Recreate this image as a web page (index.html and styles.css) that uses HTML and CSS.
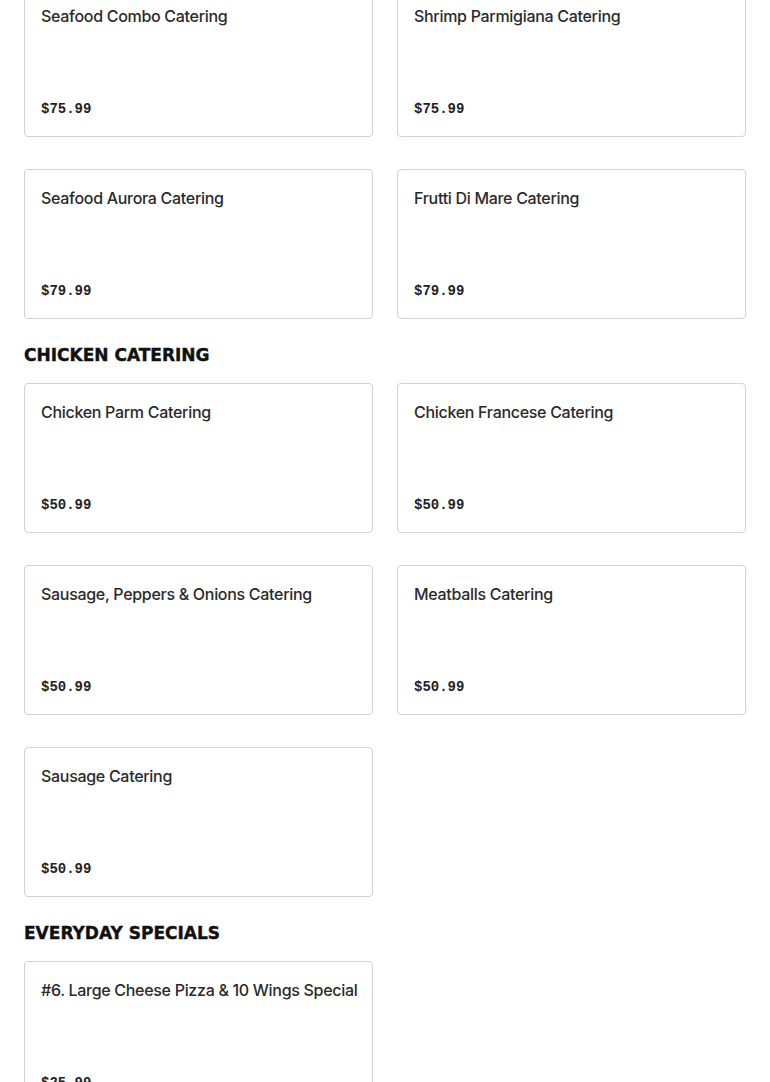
FILE: index.html
```html
<!DOCTYPE html>
<html lang="en">
<head>
    <meta charset="UTF-8">
    <meta name="viewport" content="width=device-width, initial-scale=1.0">
    <title>Menu</title>
    <link rel="stylesheet" href="styles.css">
</head>
<body>
    <div class="menu">
        <section class="section section-first">
            <div class="grid">
                <div class="card">
                    <div class="card-title">Seafood Combo Catering</div>
                    <div class="card-price">$75.99</div>
                </div>
                <div class="card">
                    <div class="card-title">Shrimp Parmigiana Catering</div>
                    <div class="card-price">$75.99</div>
                </div>
                <div class="card">
                    <div class="card-title">Seafood Aurora Catering</div>
                    <div class="card-price">$79.99</div>
                </div>
                <div class="card">
                    <div class="card-title">Frutti Di Mare Catering</div>
                    <div class="card-price">$79.99</div>
                </div>
            </div>
        </section>

        <section class="section">
            <h2 class="section-title">CHICKEN CATERING</h2>
            <div class="grid">
                <div class="card">
                    <div class="card-title">Chicken Parm Catering</div>
                    <div class="card-price">$50.99</div>
                </div>
                <div class="card">
                    <div class="card-title">Chicken Francese Catering</div>
                    <div class="card-price">$50.99</div>
                </div>
                <div class="card">
                    <div class="card-title">Sausage, Peppers &amp; Onions Catering</div>
                    <div class="card-price">$50.99</div>
                </div>
                <div class="card">
                    <div class="card-title">Meatballs Catering</div>
                    <div class="card-price">$50.99</div>
                </div>
                <div class="card">
                    <div class="card-title">Sausage Catering</div>
                    <div class="card-price">$50.99</div>
                </div>
            </div>
        </section>

        <section class="section">
            <h2 class="section-title">EVERYDAY SPECIALS</h2>
            <div class="grid">
                <div class="card">
                    <div class="card-title">#6. Large Cheese Pizza &amp; 10 Wings Special</div>
                    <div class="card-price">$25.99</div>
                </div>
            </div>
        </section>
    </div>
</body>
</html>
```

FILE: styles.css
```css
body {
    margin: 0;
    background: #fff;
    font-family: Inter, 'Liberation Sans', Arial, sans-serif;
    color: #2a2a2a;
}
.menu {
    padding: 0 24px;
}
.section-first {
    margin-top: -13px;
}
.section-title {
    margin: 24px 0 16px;
    font-family: 'DejaVu Sans', 'Liberation Sans', sans-serif;
    font-weight: 900;
    font-size: 17px;
    line-height: 24px;
    color: #111;
    -webkit-text-stroke: 0.4px #111;
}
.grid {
    display: grid;
    grid-template-columns: 1fr 1fr;
    gap: 32px 24px;
}
.card {
    height: 150px;
    box-sizing: border-box;
    border: 1px solid #d2d2d2;
    border-radius: 4px;
    padding: 17px 10px 17px 16px;
    display: flex;
    flex-direction: column;
    justify-content: space-between;
}
.card-title {
    font-size: 16px;
    line-height: 22px;
    font-weight: 500;
    letter-spacing: -0.3px;
}
.card-price {
    font-family: 'Liberation Mono', 'DejaVu Sans Mono', monospace;
    font-weight: 700;
    font-size: 14px;
    line-height: 20px;
    color: #222;
}
```
